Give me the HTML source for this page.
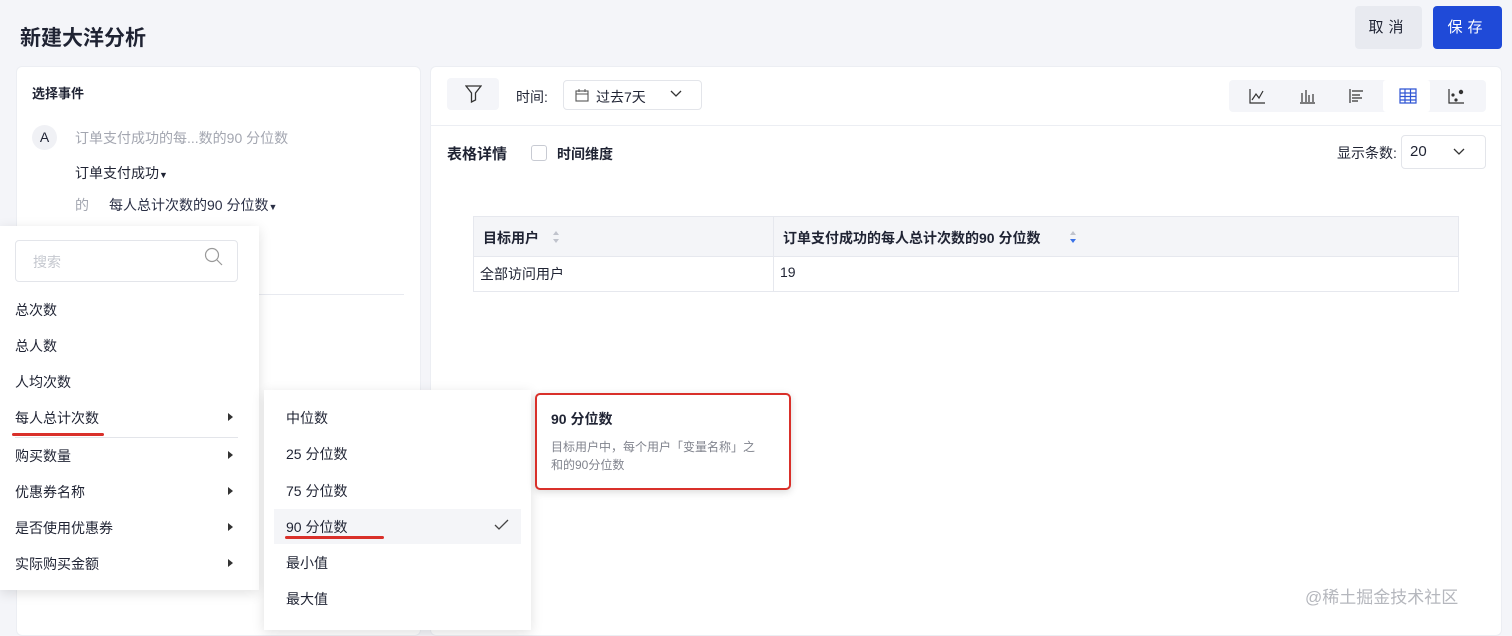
<!DOCTYPE html><html><head><meta charset="utf-8"><style>
*{box-sizing:border-box;margin:0;padding:0}
body{width:1512px;height:623px;overflow:hidden;background:#f4f5f9;font-family:"Liberation Sans","Noto Sans CJK SC",sans-serif;color:#1f2333;position:relative;font-size:14px}
.a{position:absolute}
.card{background:#fff;border-radius:6px;border:1px solid #eceef3}
.item{position:absolute;left:15px;font-size:14px;color:#1f2333}
.arr{position:absolute;left:228px;width:0;height:0;border-top:4px solid transparent;border-bottom:4px solid transparent;border-left:5px solid #333}
.ic{position:absolute;top:86px;width:20px;height:20px}
</style></head><body>
<div class="a" style="left:20px;top:22px;font-size:21px;font-weight:bold">新建大洋分析</div>
<div class="a" style="left:1355px;top:6px;width:67px;height:43px;background:#e8eaf0;border-radius:4px;text-align:center;line-height:43px;letter-spacing:5px;font-size:15px">取消</div>
<div class="a" style="left:1433px;top:6px;width:69px;height:43px;background:#1f4ad8;color:#fff;border-radius:4px;text-align:center;line-height:43px;letter-spacing:5px;font-size:15px">保存</div>

<div class="a card" style="left:16px;top:66px;width:405px;height:570px"></div>
<div class="a" style="left:32px;top:83px;font-size:13px;font-weight:bold">选择事件</div>
<div class="a" style="left:32px;top:125px;width:25px;height:25px;border-radius:50%;background:#f0f1f5;text-align:center;line-height:25px;font-size:14px">A</div>
<div class="a" style="left:75px;top:128px;color:#a3a6b0">订单支付成功的每...数的90 分位数</div>
<div class="a" style="left:75px;top:163px">订单支付成功<span style="font-size:9px">▼</span></div>
<div class="a" style="left:75px;top:195px;color:#a3a6b0">的</div>
<div class="a" style="left:109px;top:195px;color:#2a2f45">每人总计次数的90 分位数<span style="font-size:9px">▼</span></div>
<div class="a" style="left:259px;top:294px;width:145px;height:1px;background:#e8eaf0"></div>

<div class="a card" style="left:430px;top:66px;width:1072px;height:570px"></div>
<div class="a" style="left:431px;top:125px;width:1070px;height:1px;background:#eceef3"></div>
<div class="a" style="left:447px;top:78px;width:52px;height:32px;background:#f4f5f9;border-radius:4px"></div>
<svg class="a" style="left:465px;top:85px" width="17" height="18" viewBox="0 0 17 18"><path d="M1 1h15l-5.5 7v7l-4 2V8z" fill="none" stroke="#333" stroke-width="1.3"/></svg>
<div class="a" style="left:516px;top:87px">时间:</div>
<div class="a" style="left:563px;top:80px;width:139px;height:30px;border:1px solid #e3e5ea;border-radius:4px"></div>
<svg class="a" style="left:575px;top:89px" width="14" height="13"><rect x="1" y="2" width="12" height="10" fill="none" stroke="#555" stroke-width="1.1"/><path d="M1 5h12M4 0v3M10 0v3" stroke="#555"/></svg>
<div class="a" style="left:596px;top:87px">过去7天</div>
<svg class="a" style="left:670px;top:90px" width="12" height="8"><path d="M1 1l5 5 5-5" fill="none" stroke="#333" stroke-width="1.3"/></svg>
<div class="a" style="left:1229px;top:80px;width:257px;height:32px;background:#f4f5f9;border-radius:4px"></div>
<div class="a" style="left:1383px;top:80px;width:47px;height:32px;background:#fff;border-radius:3px"></div>
<svg class="ic" style="left:1248px" viewBox="0 0 20 20"><path d="M2 3v14h15M4 14l4-6 3 4 4-7" fill="none" stroke="#333" stroke-width="1.2"/></svg>
<svg class="ic" style="left:1298px" viewBox="0 0 20 20"><path d="M2 17h15M4 7v9M8 4v12M11 9v7M15 8v8" fill="none" stroke="#333" stroke-width="1.2"/></svg>
<svg class="ic" style="left:1348px" viewBox="0 0 20 20"><path d="M2 3v14M4 5h11M4 9h8M4 12h10M4 15h6" fill="none" stroke="#333" stroke-width="1.2"/></svg>
<svg class="ic" style="left:1398px" viewBox="0 0 20 20"><path d="M2 3h16v14H2zM2 7h16M2 10.5h16M2 14h16M7 3v14M12.5 3v14" fill="none" stroke="#2f55d4" stroke-width="1.2"/></svg>
<svg class="ic" style="left:1447px" viewBox="0 0 20 20"><path d="M2 3v14h15" fill="none" stroke="#333" stroke-width="1.2"/><circle cx="6" cy="9" r="1.6" fill="#333"/><circle cx="9" cy="14" r="1.6" fill="#333"/><circle cx="14" cy="6" r="2.2" fill="#333"/></svg>

<div class="a" style="left:447px;top:143px;font-size:15px;font-weight:bold">表格详情</div>
<div class="a" style="left:531px;top:145px;width:16px;height:16px;border:1px solid #c8cbd3;border-radius:3px"></div>
<div class="a" style="left:557px;top:144px;font-weight:bold">时间维度</div>
<div class="a" style="left:1337px;top:143px">显示条数:</div>
<div class="a" style="left:1401px;top:135px;width:85px;height:34px;border:1px solid #e3e5ea;border-radius:4px"></div>
<div class="a" style="left:1410px;top:143px;font-size:15px">20</div>
<svg class="a" style="left:1453px;top:148px" width="12" height="8"><path d="M1 1l5 5 5-5" fill="none" stroke="#333" stroke-width="1.3"/></svg>

<div class="a" style="left:473px;top:216px;width:986px;height:76px;border:1px solid #e6e8ee"></div>
<div class="a" style="left:474px;top:217px;width:984px;height:40px;background:#f4f5f8;border-bottom:1px solid #e6e8ee"></div>
<div class="a" style="left:773px;top:217px;width:1px;height:74px;background:#e6e8ee"></div>
<div class="a" style="left:483px;top:228px;font-weight:bold">目标用户</div>
<svg class="a" style="left:552px;top:230px" width="8" height="14"><path d="M4 1l3 4H1zM4 13l3-4H1z" fill="#c0c3cc"/></svg>
<div class="a" style="left:783px;top:228px;font-weight:bold">订单支付成功的每人总计次数的90 分位数</div>
<svg class="a" style="left:1069px;top:230px" width="8" height="14"><path d="M4 1l3 4H1z" fill="#c0c3cc"/><path d="M4 13l3-4H1z" fill="#3b72e8"/></svg>
<div class="a" style="left:480px;top:264px">全部访问用户</div>
<div class="a" style="left:780px;top:264px">19</div>

<div class="a" style="left:0;top:226px;width:259px;height:364px;background:#fff;box-shadow:0 3px 12px rgba(0,0,0,.12)"></div>
<div class="a" style="left:15px;top:240px;width:223px;height:42px;border:1px solid #e3e5ea;border-radius:4px"></div>
<div class="a" style="left:33px;top:252px;color:#c5c8cf">搜索</div>
<svg class="a" style="left:204px;top:247px" width="19" height="19"><circle cx="8" cy="8" r="6.5" fill="none" stroke="#999" stroke-width="1.2"/><path d="M13 13l5 5" stroke="#999" stroke-width="1.2"/></svg>
<div class="item" style="top:300px">总次数</div>
<div class="item" style="top:336px">总人数</div>
<div class="item" style="top:372px">人均次数</div>
<div class="item" style="top:408px">每人总计次数</div><div class="arr" style="top:413px"></div>
<div class="a" style="left:12px;top:433px;width:92px;height:3px;background:#d9302a;border-radius:2px"></div>
<div class="a" style="left:15px;top:437px;width:223px;height:1px;background:#e3e5ea"></div>
<div class="item" style="top:446px">购买数量</div><div class="arr" style="top:451px"></div>
<div class="item" style="top:482px">优惠券名称</div><div class="arr" style="top:487px"></div>
<div class="item" style="top:518px">是否使用优惠券</div><div class="arr" style="top:523px"></div>
<div class="item" style="top:554px">实际购买金额</div><div class="arr" style="top:559px"></div>

<div class="a" style="left:264px;top:390px;width:267px;height:240px;background:#fff;box-shadow:0 3px 12px rgba(0,0,0,.12)"></div>
<div class="a" style="left:274px;top:509px;width:247px;height:35px;background:#f4f5f8"></div>
<div class="item" style="left:286px;top:408px">中位数</div>
<div class="item" style="left:286px;top:444px">25 分位数</div>
<div class="item" style="left:286px;top:481px">75 分位数</div>
<div class="item" style="left:286px;top:517px">90 分位数</div>
<svg class="a" style="left:494px;top:519px" width="15" height="12"><path d="M1 6l4 4 9-9" fill="none" stroke="#444" stroke-width="1.3"/></svg>
<div class="a" style="left:285px;top:536px;width:99px;height:3px;background:#d9302a;border-radius:2px"></div>
<div class="item" style="left:286px;top:553px">最小值</div>
<div class="item" style="left:286px;top:589px">最大值</div>

<div class="a" style="left:535px;top:393px;width:256px;height:97px;background:#fff;border:2px solid #d9302a;border-radius:5px;box-shadow:0 2px 8px rgba(0,0,0,.15)"></div>
<div class="a" style="left:551px;top:409px;font-weight:bold;font-size:14px">90 分位数</div>
<div class="a" style="left:551px;top:438px;font-size:12px;color:#80838d;line-height:18px;width:212px">目标用户中，每个用户「变量名称」之和的90分位数</div>

<div class="a" style="left:1305px;top:583px;font-size:17px;color:#b5b7bd">@稀土掘金技术社区</div>
</body></html>
